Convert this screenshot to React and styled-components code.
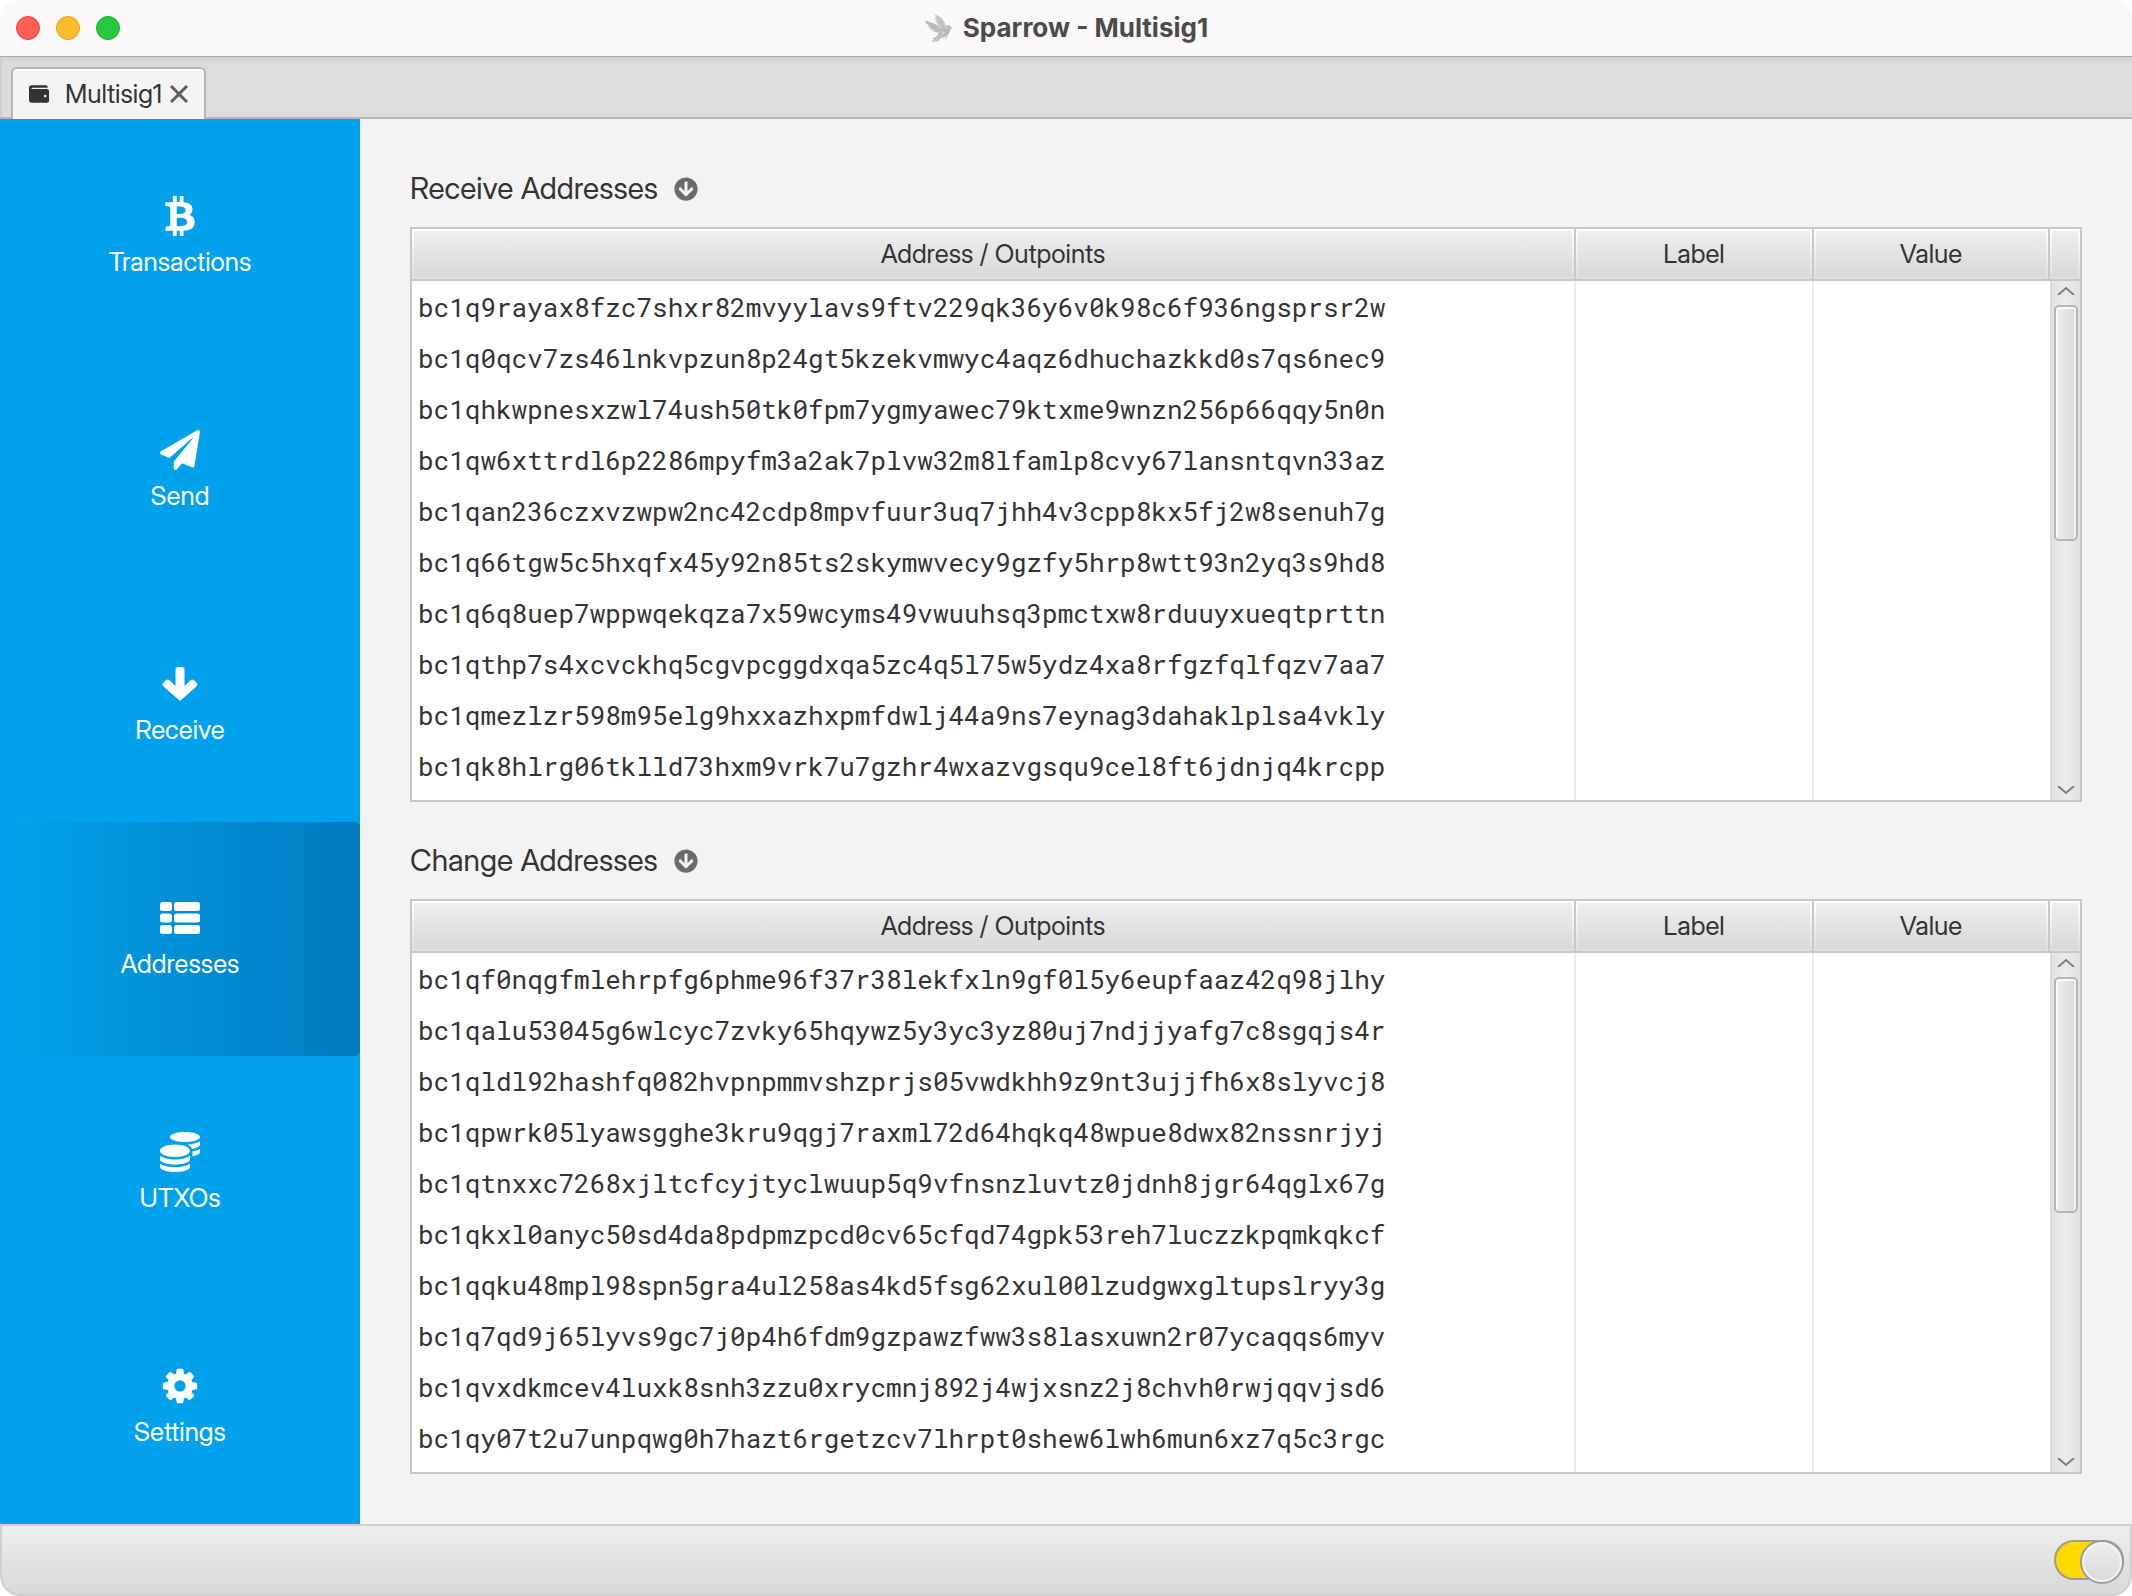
import React, { useState } from "react";
import styled, { createGlobalStyle } from "styled-components";
import {
  FaArrowCircleDown,
  FaBtc,
  FaCoins,
  FaPaperPlane,
  FaWallet,
} from "react-icons/fa";

const receiveAddresses = [
  "bc1q9rayax8fzc7shxr82mvyylavs9ftv229qk36y6v0k98c6f936ngsprsr2w",
  "bc1q0qcv7zs46lnkvpzun8p24gt5kzekvmwyc4aqz6dhuchazkkd0s7qs6nec9",
  "bc1qhkwpnesxzwl74ush50tk0fpm7ygmyawec79ktxme9wnzn256p66qqy5n0n",
  "bc1qw6xttrdl6p2286mpyfm3a2ak7plvw32m8lfamlp8cvy67lansntqvn33az",
  "bc1qan236czxvzwpw2nc42cdp8mpvfuur3uq7jhh4v3cpp8kx5fj2w8senuh7g",
  "bc1q66tgw5c5hxqfx45y92n85ts2skymwvecy9gzfy5hrp8wtt93n2yq3s9hd8",
  "bc1q6q8uep7wppwqekqza7x59wcyms49vwuuhsq3pmctxw8rduuyxueqtprttn",
  "bc1qthp7s4xcvckhq5cgvpcggdxqa5zc4q5l75w5ydz4xa8rfgzfqlfqzv7aa7",
  "bc1qmezlzr598m95elg9hxxazhxpmfdwlj44a9ns7eynag3dahaklplsa4vkly",
  "bc1qk8hlrg06tklld73hxm9vrk7u7gzhr4wxazvgsqu9cel8ft6jdnjq4krcpp",
];

const changeAddresses = [
  "bc1qf0nqgfmlehrpfg6phme96f37r38lekfxln9gf0l5y6eupfaaz42q98jlhy",
  "bc1qalu53045g6wlcyc7zvky65hqywz5y3yc3yz80uj7ndjjyafg7c8sgqjs4r",
  "bc1qldl92hashfq082hvpnpmmvshzprjs05vwdkhh9z9nt3ujjfh6x8slyvcj8",
  "bc1qpwrk05lyawsgghe3kru9qgj7raxml72d64hqkq48wpue8dwx82nssnrjyj",
  "bc1qtnxxc7268xjltcfcyjtyclwuup5q9vfnsnzluvtz0jdnh8jgr64qglx67g",
  "bc1qkxl0anyc50sd4da8pdpmzpcd0cv65cfqd74gpk53reh7luczzkpqmkqkcf",
  "bc1qqku48mpl98spn5gra4ul258as4kd5fsg62xul00lzudgwxgltupslryy3g",
  "bc1q7qd9j65lyvs9gc7j0p4h6fdm9gzpawzfww3s8lasxuwn2r07ycaqqs6myv",
  "bc1qvxdkmcev4luxk8snh3zzu0xrycmnj892j4wjxsnz2j8chvh0rwjqqvjsd6",
  "bc1qy07t2u7unpqwg0h7hazt6rgetzcv7lhrpt0shew6lwh6mun6xz7q5c3rgc",
];

const ReceiveIcon = () => (
  <svg viewBox="0 0 40 40">
    <path
      d="M18 3h4q2.500 0 2.500 2.500V22l5.700-5.500q2.100-2 4.200 0l2 2q2.100 2 0 4L20 37 3.600 22.500q-2.100-2 0-4l2-2q2.100-2 4.200 0l5.700 5.500V5.500Q15.500 3 18 3z"
      fill="currentColor"
    />
  </svg>
);

const ListIcon = () => (
  <svg viewBox="0 0 40 40" fill="currentColor">
    <rect x="0" y="4" width="12" height="9" rx="2.500" />
    <rect x="14" y="4" width="26" height="9" rx="2.500" />
    <rect x="0" y="15.500" width="12" height="9" rx="2.500" />
    <rect x="14" y="15.500" width="26" height="9" rx="2.500" />
    <rect x="0" y="27" width="12" height="9" rx="2.500" />
    <rect x="14" y="27" width="26" height="9" rx="2.500" />
  </svg>
);

const CogIcon = () => (
  <svg viewBox="0 0 1792 1792" fill="currentColor">
    <path d="M1152 896q0-106-75-181t-181-75-181 75-75 181 75 181 181 75 181-75 75-181zm512-109v222q0 12-8 23t-20 13l-185 28q-19 54-39 91 35 50 107 138 10 12 10 25t-9 23q-27 37-99 108t-94 71q-12 0-26-9l-138-108q-44 23-91 38-16 136-29 186-7 28-36 28h-222q-14 0-24.5-8.5t-11.5-21.5l-28-184q-49-16-90-37l-141 107q-10 9-25 9-14 0-25-11-126-114-165-168-7-10-7-23 0-12 8-23 15-21 51-66.5t54-70.5q-27-50-41-99l-183-27q-13-2-21-12.5t-8-23.5v-222q0-12 8-23t19-13l186-28q14-46 39-92-40-57-107-138-10-12-10-24 0-10 9-23 26-36 98.5-107.5t94.5-71.5q13 0 26 10l138 107q44-23 91-38 16-136 29-186 7-28 36-28h222q14 0 24.5 8.5t11.5 21.5l28 184q49 16 90 37l142-107q9-9 24-9 13 0 25 10 129 119 165 170 7 8 7 22 0 12-8 23-15 21-51 66.5t-54 70.5q26 50 41 98l183 28q13 2 21 12.5t8 23.5z" />
  </svg>
);

const SparrowIcon = () => (
  <svg viewBox="0 0 87 87" width="29" height="29">
    <path d="M1 19l17 6 16 5 13 9 6 12-12 5-15-4 3-3-12-3 4-3-10-7 5-1-13-9 5-1z" fill="#bebebe" />
    <path d="M33 1l13 6 10 9 8 14 4 13-12 6-10-7-7-10 3-1-8-9 4-1-7-9 5 0z" fill="#cacaca" />
    <path d="M37 5l11 11 9 15 4 11M40 18l9 9 8 13M8 22l17 8 15 13M18 36l20 10" fill="none" stroke="#adadad" strokeWidth="2" />
    <path d="M64 38l7-5 7 2 2 4 6 3-6 3-4 11-6 9-8 4-12 3-8 10-20 1 8-7-5-1 15-10 4-9-1-7 9-6 10-1z" fill="#b7b7b7" />
    <path d="M62 66l6 6-5 4M67 71l4-4M54 71l5 4" fill="none" stroke="#c0c0c0" strokeWidth="2" />
    <path d="M64 43l9-2M49 53l13 3-9 8-9 5M31 80l12-8" fill="none" stroke="#dedede" strokeWidth="3" />
  </svg>
);

const navItems = [
  { label: "Transactions", icon: <FaBtc /> },
  { label: "Send", icon: <FaPaperPlane /> },
  { label: "Receive", icon: <ReceiveIcon /> },
  { label: "Addresses", icon: <ListIcon /> },
  { label: "UTXOs", icon: <FaCoins /> },
  { label: "Settings", icon: <CogIcon /> },
];

const AddressSection = ({ title, addresses }) => (
  <Section>
    <Heading>
      {title}
      <ExportButton aria-label={`Export ${title}`}>
        <FaArrowCircleDown />
      </ExportButton>
    </Heading>
    <TableFrame>
      <TableArea>
        <Table>
          <thead>
            <tr>
              <HeaderCell>Address / Outpoints</HeaderCell>
              <HeaderCell $width={238}>Label</HeaderCell>
              <HeaderCell $width={236}>Value</HeaderCell>
            </tr>
          </thead>
          <tbody>
            {addresses.map((address) => (
              <AddressRow key={address}>
                <Cell>{address}</Cell>
                <Cell />
                <Cell />
              </AddressRow>
            ))}
            <tr aria-hidden="true">
              <Cell />
              <Cell />
              <Cell />
            </tr>
          </tbody>
        </Table>
      </TableArea>
      <ScrollColumn>
        <Corner />
        <ScrollTrack>
          <ScrollButton $align="flex-start" aria-label="Scroll up">
            <svg viewBox="0 0 18 9" width="18" height="9">
              <path d="M1 9L9 2l8 7" fill="none" stroke="#7f7f7f" strokeWidth="2" />
            </svg>
          </ScrollButton>
          <ThumbLane>
            <ScrollThumb />
          </ThumbLane>
          <ScrollButton $align="flex-end" aria-label="Scroll down">
            <svg viewBox="0 0 18 9" width="18" height="9">
              <path d="M1 0l8 7 8-7" fill="none" stroke="#7f7f7f" strokeWidth="2" />
            </svg>
          </ScrollButton>
        </ScrollTrack>
      </ScrollColumn>
    </TableFrame>
  </Section>
);

const App = () => {
  const [active, setActive] = useState("Addresses");
  const [online, setOnline] = useState(true);

  return (
    <>
      <GlobalStyle />
      <Window>
        <TitleBar>
          <WindowButtons>
            <WindowButton $color="#ff5f57" $edge="#e2463f" aria-label="Close" />
            <WindowButton $color="#febc2e" $edge="#e1a116" aria-label="Minimize" />
            <WindowButton $color="#28c840" $edge="#1dad2b" aria-label="Zoom" />
          </WindowButtons>
          <Title>
            <SparrowIcon />
            Sparrow - Multisig1
          </Title>
        </TitleBar>
        <TabBar>
          <Tab>
            <FaWallet size={20} />
            <TabName>Multisig1</TabName>
            <CloseTab aria-label="Close tab">
              <svg viewBox="0 0 18 18" width="18" height="18">
                <path d="M1 1l16 16M17 1L1 17" fill="none" stroke="#5c5c5c" strokeWidth="3" />
              </svg>
            </CloseTab>
          </Tab>
        </TabBar>
        <Body>
          <Nav>
            {navItems.map((item) => (
              <NavButton
                key={item.label}
                $active={item.label === active}
                onClick={() => setActive(item.label)}
              >
                {item.icon}
                <NavLabel>{item.label}</NavLabel>
              </NavButton>
            ))}
          </Nav>
          <Content>
            <AddressSection title="Receive Addresses" addresses={receiveAddresses} />
            <AddressSection title="Change Addresses" addresses={changeAddresses} />
          </Content>
        </Body>
        <StatusBar>
          <Toggle
            type="checkbox"
            aria-label="Server connection"
            checked={online}
            onChange={(e) => setOnline(e.target.checked)}
          />
        </StatusBar>
      </Window>
    </>
  );
};

export default App;

const GlobalStyle = createGlobalStyle`
  * {
    box-sizing: border-box;
  }
  body {
    margin: 0;
    background: #fff;
    color: #333;
    font-family: "Inter Display", "Inter Tight", Inter, "Liberation Sans", sans-serif;
  }
  button {
    display: flex;
    align-items: center;
    justify-content: center;
    padding: 0;
    border: none;
    background: none;
    color: inherit;
    font: inherit;
    cursor: pointer;
  }
`;

const Window = styled.div`
  display: flex;
  flex-direction: column;
  min-height: 100vh;
  border-radius: 20px;
  overflow: hidden;
  background: #f3f3f3;
`;

const TitleBar = styled.header`
  display: grid;
  grid-template-columns: 1fr auto 1fr;
  align-items: center;
  height: 57px;
  padding: 0 16px;
  background: #faf8f9;
  border-bottom: 1px solid #a9a9a9;
`;

const WindowButtons = styled.div`
  display: flex;
  gap: 16px;
`;

const WindowButton = styled.button`
  width: 24px;
  height: 24px;
  border-radius: 50%;
  background: ${(props) => props.$color};
  border: 1px solid ${(props) => props.$edge};
`;

const Title = styled.h1`
  display: flex;
  align-items: center;
  gap: 10px;
  margin: 0;
  font-family: Inter, "Liberation Sans", sans-serif;
  font-size: 26px;
  font-weight: 700;
  line-height: 32px;
  color: #4b4b4b;
`;

const TabBar = styled.div`
  display: flex;
  align-items: flex-end;
  height: 62px;
  padding-left: 11px;
  background: linear-gradient(#d3d3d3, #dcdcdc 8px);
  box-shadow: inset 0 -2px #b5b5b5, inset 2px 0 #cfcfcf;
`;

const Tab = styled.div`
  display: flex;
  align-items: center;
  height: 52px;
  padding: 0 16px;
  background: #f4f4f4;
  border: 2px solid #b5b5b5;
  border-bottom: none;
  border-radius: 6px 6px 0 0;
  box-shadow: inset 0 2px #fff;
`;

const TabName = styled.span`
  margin: 0 8px 0 16px;
  font-size: 26px;
  line-height: 30px;
`;

const CloseTab = styled.button`
  width: 18px;
  height: 18px;
`;

const Body = styled.div`
  display: flex;
  flex: 1;
`;

const Nav = styled.nav`
  display: flex;
  flex-direction: column;
  width: 360px;
  background: #01a2eb;
`;

const NavButton = styled.button`
  flex: 1;
  flex-direction: column;
  gap: 11px;
  color: #fff;
  border-radius: 5px;
  background: ${(props) =>
    props.$active ? "linear-gradient(90deg, #01a2eb 10px, #007bbf)" : "none"};

  svg {
    width: 40px;
    height: 40px;
  }
`;

const NavLabel = styled.span`
  font-size: 26px;
  line-height: 30px;
`;

const Content = styled.main`
  display: flex;
  flex: 1;
  flex-direction: column;
  gap: 40px;
  min-width: 0;
  padding: 51px 50px 50px;
`;

const Section = styled.section`
  display: flex;
  flex: 1;
  flex-direction: column;
`;

const Heading = styled.h2`
  display: flex;
  align-items: flex-start;
  gap: 16px;
  height: 57px;
  margin: 0;
  font-size: 30px;
  font-weight: 400;
  line-height: 36px;
`;

const ExportButton = styled.button`
  height: 38px;
  font-size: 24px;
  color: #6b6b6b;
`;

const TableFrame = styled.div`
  display: flex;
  flex: 1;
  border: 2px solid #c8c8c8;
  background: #fff;
`;

const TableArea = styled.div`
  flex: 1;
  min-width: 0;
`;

const Table = styled.table`
  width: 100%;
  height: 100%;
  table-layout: fixed;
  border-spacing: 0;
`;

const HeaderCell = styled.th`
  width: ${(props) => (props.$width ? `${props.$width}px` : "auto")};
  height: 52px;
  padding: 2px;
  border-right: 2px solid #c8c8c8;
  border-bottom: 2px solid #c8c8c8;
  background: linear-gradient(#eee, #d9d9d9) content-box,
    linear-gradient(#fff, #dedede) padding-box;
  font-size: 26px;
  font-weight: 400;
  line-height: 46px;
`;

const AddressRow = styled.tr`
  height: 51px;
`;

const Cell = styled.td`
  padding: 0 6px;
  border-right: 2px solid #ececec;
  font-family: "Roboto Mono", "Liberation Mono", monospace;
  font-size: 26px;
  line-height: 30px;
  white-space: nowrap;

  &:last-child {
    border-right: none;
  }
`;

const ScrollColumn = styled.div`
  display: flex;
  flex-direction: column;
  width: 30px;
`;

const Corner = styled.div`
  height: 52px;
  padding: 2px;
  border-bottom: 2px solid #c8c8c8;
  background: linear-gradient(#eee, #d9d9d9) content-box,
    linear-gradient(#fff, #dedede) padding-box;
`;

const ScrollTrack = styled.div`
  display: flex;
  flex: 1;
  flex-direction: column;
  border-left: 2px solid #dadada;
  background: linear-gradient(90deg, #e2e2e2, #ebebeb 50%, #e2e2e2);
`;

const ScrollButton = styled.button`
  align-items: ${(props) => props.$align};
  height: 24px;
  padding: 5px 0;
`;

const ThumbLane = styled.div`
  flex: 1;
  padding: 0 2px;
`;

const ScrollThumb = styled.div`
  height: 50%;
  border: 2px solid #b5b5b5;
  border-radius: 5px;
  background: linear-gradient(90deg, #ededed, #dadada);
  box-shadow: inset 2px 2px #fafafa, inset -2px 0 #efefef;
`;

const StatusBar = styled.footer`
  display: flex;
  align-items: center;
  justify-content: flex-end;
  height: 72px;
  padding: 0 6px;
  border: 2px solid #d0d0d0;
  border-radius: 0 0 20px 20px;
  background: linear-gradient(#eee, #d8d8d8);
`;

const Toggle = styled.input`
  appearance: none;
  display: flex;
  justify-content: ${(props) => (props.checked ? "flex-end" : "flex-start")};
  width: 70px;
  height: 40px;
  margin: 0;
  border-radius: 20px;
  background: ${(props) => (props.checked ? "#ffd900" : "#e2e2e2")};
  box-shadow: inset 0 0 0 2px #9c9c9c;
  cursor: pointer;

  &::before {
    content: "";
    width: 40px;
    height: 40px;
    border: 2px solid #9c9c9c;
    border-radius: 50%;
    background: linear-gradient(#eee, #dadada);
    box-shadow: inset 0 0 0 2px #f4f4f4;
  }
`;
